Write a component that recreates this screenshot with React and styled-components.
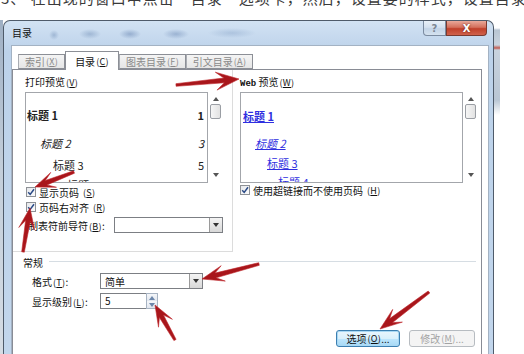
import React from "react";
import styled, { createGlobalStyle } from "styled-components";

const FONT = `"Noto Sans CJK SC", "Noto Sans", sans-serif`;

const GlobalStyle = createGlobalStyle`
  html, body {
    margin: 0;
    padding: 0;
    background: #fff;
    font-family: ${FONT};
    overflow: hidden;
  }
`;

// red annotation arrows drawn over the dialog: [tail, tip]
const arrows = [
  [[176, 85], [239, 79], 20, 9],
  [[74, 172], [35, 187], 17, 8],
  [[23, 252], [30, 208], 18, 8],
  [[259, 264], [202, 279], 19, 8],
  [[175, 340], [155, 305], 18, 8],
  [[429, 292], [380, 329], 19, 8],
];

function arrowPoints([x1, y1], [x2, y2], head, hw) {
  const dx = x2 - x1;
  const dy = y2 - y1;
  const len = Math.hypot(dx, dy);
  const ux = dx / len;
  const uy = dy / len;
  const nx = -uy;
  const ny = ux;
  const hx = x2 - ux * head;
  const hy = y2 - uy * head;
  const jx = hx + ux * 5;
  const jy = hy + uy * 5;
  const bx = hx - ux * 3;
  const by = hy - uy * 3;
  const sw = 2.4;
  const pts = [
    [x1 + nx * 1.3, y1 + ny * 1.3],
    [jx + nx * sw, jy + ny * sw],
    [bx + nx * hw, by + ny * hw],
    [x2, y2],
    [bx - nx * hw, by - ny * hw],
    [jx - nx * sw, jy - ny * sw],
    [x1 - nx * 1.3, y1 - ny * 1.3],
  ];
  return pts.map((p) => p.map((v) => v.toFixed(1)).join(",")).join(" ");
}

const leftEntries = [
  { text: "标题 1", num: "1", indent: 0, top: 15, bold: true },
  { text: "标题 2", num: "3", indent: 13, top: 14, italic: true },
  { text: "标题 3", num: "5", indent: 26, top: 8 },
  { text: "标题 4", num: "7", indent: 40, top: 6 },
];

const webEntries = [
  { text: "标题 1", indent: 0, top: 16, bold: true },
  { text: "标题 2", indent: 12, top: 13, italic: true },
  { text: "标题 3", indent: 24, top: 6 },
  { text: "标题 4", indent: 35, top: 5 },
];

const Mn = ({ k }) => (
  <Mnemonic>
    (<u>{k}</u>)
  </Mnemonic>
);

const Check = () => (
  <CheckBox>
    <svg width="8" height="8" viewBox="0 0 8 8">
      <path d="M1.2 4.2 L3.2 6.4 L7 1.2" fill="none" stroke="#2a4a86" strokeWidth="1.5" />
    </svg>
  </CheckBox>
);

const Tri = ({ up, color = "#333" }) => (
  <svg width="6" height="4" viewBox="0 0 6 4">
    <path d={up ? "M0 4 L3 0 L6 4 Z" : "M0 0 L6 0 L3 4 Z"} fill={color} />
  </svg>
);

const Scroll = () => (
  <ScrollCol>
    <ScrollArrow>
      <Tri up color="#555" />
    </ScrollArrow>
    <Thumb />
    <ScrollArrow $bottom>
      <Tri color="#555" />
    </ScrollArrow>
  </ScrollCol>
);

function App() {
  return (
    <Page>
      <GlobalStyle />
      <TopLine>
        <TopText>3、 在出现的窗口中点击“目录”选项卡，然后，设置要的样式，设置目录的显示级别，再点击选项进行设置</TopText>
      </TopLine>

      <Stage>
        <BackSliver />
        <Dialog>
          <TitleBar>
            <Title>目录</Title>
            <Caption>
              <CapBtn>?</CapBtn>
              <CapBtn $close>X</CapBtn>
            </Caption>
          </TitleBar>

          <Client>
            <TabStrip>
              <Tab $w={47}>索引<Mn k="X" /></Tab>
              <Tab $w={54} $active>目录<Mn k="C" /></Tab>
              <Tab $w={67}>图表目录<Mn k="F" /></Tab>
              <Tab $w={67}>引文目录<Mn k="A" /></Tab>
            </TabStrip>

            <Panel>
              <Columns>
                <LeftCol>
                  <SectionLabel>打印预览<Mn k="V" /></SectionLabel>
                  <PreviewBox>
                    <ListArea>
                      {leftEntries.map((e) => (
                        <Entry key={e.text} $indent={e.indent} $top={e.top} $bold={e.bold} $italic={e.italic}>
                          {e.text}
                          <PageNum>{e.num}</PageNum>
                        </Entry>
                      ))}
                    </ListArea>
                    <Scroll />
                  </PreviewBox>
                  <CheckRow $top={2}>
                    <Check />
                    显示页码<Mn k="S" />
                  </CheckRow>
                  <CheckRow $top={1}>
                    <Check />
                    页码右对齐<Mn k="R" />
                  </CheckRow>
                  <LeaderRow>
                    <span>制表符前导符<Mn k="B" />:</span>
                    <SelectBox $w={109}>
                      <DropBtn>
                        <Tri />
                      </DropBtn>
                    </SelectBox>
                  </LeaderRow>
                </LeftCol>

                <RightCol>
                  <SectionLabel>
                    <WebWord>Web</WebWord> 预览<Mn k="W" />
                  </SectionLabel>
                  <PreviewBox>
                    <ListArea>
                      {webEntries.map((e) => (
                        <Entry key={e.text} $web $indent={e.indent} $top={e.top} $bold={e.bold} $italic={e.italic}>
                          <LinkText>{e.text}</LinkText>
                        </Entry>
                      ))}
                    </ListArea>
                    <Scroll />
                  </PreviewBox>
                  <CheckRow $top={0} $flush>
                    <Check />
                    使用超链接而不使用页码<Mn k="H" />
                  </CheckRow>
                </RightCol>
              </Columns>

              <GroupHeader>
                常规
                <GroupLine />
              </GroupHeader>
              <FormRow>
                <FieldLabel>格式<Mn k="T" />:</FieldLabel>
                <SelectBox $w={103}>
                  <SelectText>简单</SelectText>
                  <DropBtn>
                    <Tri />
                  </DropBtn>
                </SelectBox>
              </FormRow>
              <FormRow>
                <FieldLabel>显示级别<Mn k="L" />:</FieldLabel>
                <SpinInput>5</SpinInput>
                <SpinBtns>
                  <SpinHalf>
                    <Tri up color="#6c86aa" />
                  </SpinHalf>
                  <SpinHalf>
                    <Tri color="#6c86aa" />
                  </SpinHalf>
                </SpinBtns>
              </FormRow>

              <ButtonRow>
                <DlgButton $w={64} $focus>选项<Mn k="O" />...</DlgButton>
                <DlgButton $w={66} $disabled>修改<Mn k="M" />...</DlgButton>
              </ButtonRow>
            </Panel>
          </Client>
        </Dialog>
        <RightEdge />
      </Stage>

      <Overlay width="524" height="354" viewBox="0 0 524 354">
        {arrows.map(([tail, tip, head, hw], i) => (
          <polygon key={i} points={arrowPoints(tail, tip, head, hw)} fill="#a8161b" stroke="#c0262b" strokeWidth="0.6" strokeLinejoin="round" />
        ))}
      </Overlay>
    </Page>
  );
}

const Page = styled.div`
  position: relative;
  width: 524px;
  height: 354px;
  overflow: hidden;
  background: #fff;
`;

const TopLine = styled.div`
  height: 8px;
  overflow: hidden;
  white-space: nowrap;
  padding-left: 1px;
`;

const TopText = styled.div`
  margin-top: -11px;
  font-size: 15px;
  line-height: 17px;
  letter-spacing: 1px;
  color: #3a3a3a;
`;

const Stage = styled.div`
  display: flex;
  margin-top: 12px;
  height: 334px;
`;

const BackSliver = styled.div`
  width: 3px;
  background: linear-gradient(#9fb0c4, #c3ceda 45%, #d5dce4);
`;

const Dialog = styled.div`
  width: 491px;
  box-sizing: border-box;
  border: 1px solid #4f5b6a;
  border-bottom: none;
  border-radius: 7px 7px 0 0;
  padding: 0 4px 0 7px;
  display: flex;
  flex-direction: column;
  background:
    radial-gradient(ellipse 5px 5px at 50px 14px, rgba(110, 140, 180, 0.45), transparent),
    radial-gradient(ellipse 11px 5px at 86px 13px, rgba(110, 140, 180, 0.45), transparent),
    radial-gradient(ellipse 11px 5px at 126px 13px, rgba(100, 130, 175, 0.5), transparent),
    radial-gradient(ellipse 13px 5px at 172px 13px, rgba(100, 130, 175, 0.45), transparent),
    radial-gradient(ellipse 24px 5px at 228px 12px, rgba(120, 150, 190, 0.35), transparent),
    linear-gradient(#d2e2f3, #bcd2ea 30px, #c2d6ec);
`;

const TitleBar = styled.div`
  height: 24px;
  display: flex;
  align-items: flex-start;
`;

const Title = styled.div`
  margin-left: 1px;
  font-size: 10px;
  line-height: 24px;
  color: #111;
`;

const Caption = styled.div`
  margin-left: auto;
  margin-right: 2px;
  display: flex;
`;

const CapBtn = styled.div`
  width: ${(p) => (p.$close ? 41 : 23)}px;
  height: 15px;
  box-sizing: border-box;
  border: 1px solid ${(p) => (p.$close ? "#7a3a30" : "#7b8ba0")};
  border-top: none;
  border-radius: ${(p) => (p.$close ? "0 0 4px 0" : "0 0 0 4px")};
  display: flex;
  align-items: center;
  justify-content: center;
  font-family: "DejaVu Sans", sans-serif;
  font-weight: bold;
  font-size: 10px;
  color: ${(p) => (p.$close ? "#fff" : "#7d8794")};
  text-shadow: ${(p) => (p.$close ? "0 0 2px #5a1a10" : "none")};
  background: ${(p) =>
    p.$close
      ? "linear-gradient(#e9a899, #d4705c 45%, #c0402a 55%, #d0624c)"
      : "linear-gradient(#e8f0f8, #d4e1ef 45%, #c3d4e7 55%, #d5e2ef)"};
`;

const Client = styled.div`
  flex: 1;
  background: #fff;
  border: 1px solid #a3b2c3;
  border-bottom: none;
  display: flex;
  flex-direction: column;
`;

const TabStrip = styled.div`
  display: flex;
  align-items: flex-end;
  height: 18px;
  margin-top: 5px;
  padding-left: 6px;
`;

const Tab = styled.div`
  position: relative;
  z-index: ${(p) => (p.$active ? 1 : 0)};
  width: ${(p) => p.$w}px;
  height: ${(p) => (p.$active ? 19 : 15)}px;
  margin-bottom: ${(p) => (p.$active ? -1 : 0)}px;
  box-sizing: border-box;
  border: 1px solid #8c8f96;
  border-bottom: ${(p) => (p.$active ? "none" : "1px solid #8c8f96")};
  border-left: ${(p) => (p.$active ? "1px solid #8c8f96" : "1px solid #a9acb2")};
  background: ${(p) => (p.$active ? "#fff" : "linear-gradient(#f4f4f4, #e6e6e6)")};
  display: flex;
  align-items: center;
  justify-content: center;
  font-size: 10px;
  color: ${(p) => (p.$active ? "#111" : "#8a8a8a")};
`;

const Mnemonic = styled.span`
  font-size: 9px;
  letter-spacing: 0.3px;
  margin-left: 1px;
`;

const Panel = styled.div`
  flex: 1;
  margin-right: 6px;
  border: 1px solid #898c95;
  border-bottom: none;
  display: flex;
  flex-direction: column;
`;

const Columns = styled.div`
  display: flex;
  height: 182px;
`;

const LeftCol = styled.div`
  width: 220px;
  box-sizing: border-box;
  padding: 5px 9px 0 12px;
  border-right: 1px solid #dcdcdc;
  border-bottom: 1px solid #dcdcdc;
`;

const RightCol = styled.div`
  flex: 1;
  padding: 5px 3px 0 7px;
`;

const SectionLabel = styled.div`
  height: 14px;
  font-size: 10px;
  line-height: 14px;
  color: #111;
`;

const WebWord = styled.span`
  font-family: "Liberation Mono", monospace;
  font-weight: bold;
  font-size: 9px;
`;

const PreviewBox = styled.div`
  display: flex;
  height: 91px;
  margin-top: 3px;
`;

const ListArea = styled.div`
  flex: 1;
  border: 1px solid #a3a6ab;
  padding-left: 1px;
  overflow: hidden;
  background: #fff;
`;

const Entry = styled.div`
  display: flex;
  height: 14px;
  line-height: 14px;
  margin-top: ${(p) => p.$top}px;
  padding-left: ${(p) => p.$indent + (p.$web ? 1 : 0)}px;
  font-size: 11px;
  font-weight: ${(p) => (p.$bold ? 700 : 400)};
  font-style: ${(p) => (p.$italic ? "italic" : "normal")};
  color: ${(p) => (p.$web ? "#2f2fe0" : "#222")};
`;

const LinkText = styled.span`
  text-decoration: underline;
`;

const PageNum = styled.span`
  margin-left: auto;
  margin-right: 3px;
`;

const ScrollCol = styled.div`
  width: 15px;
  display: flex;
  flex-direction: column;
  align-items: center;
`;

const ScrollArrow = styled.div`
  height: 9px;
  display: flex;
  align-items: center;
  justify-content: center;
  margin-top: ${(p) => (p.$bottom ? "auto" : "2px")};
  margin-bottom: ${(p) => (p.$bottom ? "4px" : "0")};
`;

const Thumb = styled.div`
  width: 11px;
  height: 15px;
  margin-top: 1px;
  box-sizing: border-box;
  border: 1px solid #9a9ea4;
  border-radius: 2px;
  background: linear-gradient(90deg, #f6f6f6, #e2e2e2);
`;

const CheckRow = styled.div`
  display: flex;
  align-items: center;
  gap: 3px;
  height: 14px;
  margin-top: ${(p) => p.$top}px;
  padding-left: ${(p) => (p.$flush ? 0 : 1)}px;
  font-size: 10px;
  color: #111;
`;

const CheckBox = styled.div`
  width: 10px;
  height: 10px;
  box-sizing: border-box;
  border: 1px solid #8e9196;
  background: linear-gradient(135deg, #e6e8ec, #fbfbfb);
  display: flex;
  align-items: center;
  justify-content: center;
`;

const LeaderRow = styled.div`
  display: flex;
  align-items: center;
  justify-content: space-between;
  height: 16px;
  margin-top: 3px;
  padding-left: 3px;
  font-size: 10px;
  color: #111;
`;

const SelectBox = styled.div`
  width: ${(p) => p.$w}px;
  height: 16px;
  box-sizing: border-box;
  border: 1px solid #7c7f84;
  background: #fff;
  display: flex;
  align-items: center;
`;

const SelectText = styled.span`
  padding-left: 4px;
  font-size: 10px;
  color: #111;
`;

const DropBtn = styled.div`
  margin-left: auto;
  width: 13px;
  height: 14px;
  box-sizing: border-box;
  border-left: 1px solid #9a9a9a;
  background: linear-gradient(#f4f4f4, #d8d8d8);
  display: flex;
  align-items: center;
  justify-content: center;
`;

const GroupHeader = styled.div`
  display: flex;
  align-items: center;
  height: 14px;
  margin-top: 3px;
  padding-left: 10px;
  font-size: 10px;
  color: #111;
`;

const GroupLine = styled.div`
  flex: 1;
  height: 1px;
  margin: 0 5px 2px 6px;
  background: #d6dde3;
`;

const FormRow = styled.div`
  display: flex;
  align-items: center;
  height: 16px;
  margin-top: 4px;
  padding-left: 19px;
  font-size: 10px;
  color: #111;
`;

const FieldLabel = styled.div`
  width: 68px;
`;

const SpinInput = styled.div`
  width: 46px;
  height: 16px;
  box-sizing: border-box;
  border: 1px solid #7c7f84;
  border-right: none;
  padding-left: 4px;
  font-size: 10px;
  line-height: 14px;
`;

const SpinBtns = styled.div`
  width: 12px;
  height: 16px;
  box-sizing: border-box;
  border: 1px solid #a7b3c2;
  display: flex;
  flex-direction: column;
`;

const SpinHalf = styled.div`
  flex: 1;
  display: flex;
  align-items: center;
  justify-content: center;
  background: linear-gradient(#f5f7fa, #e1e6ee);
`;

const ButtonRow = styled.div`
  display: flex;
  justify-content: flex-end;
  gap: 9px;
  margin-top: 21px;
  padding-right: 6px;
`;

const DlgButton = styled.div`
  width: ${(p) => p.$w}px;
  height: 17px;
  box-sizing: border-box;
  border: 1px solid ${(p) => (p.$focus ? "#3c7fb1" : "#b7bcc1")};
  border-radius: 3px;
  box-shadow: ${(p) => (p.$focus ? "inset 0 0 0 1px #a8d8f4" : "none")};
  background: ${(p) =>
    p.$focus
      ? "linear-gradient(#eaf6fd, #d9f0fc 50%, #bee6fd 50%, #a7d9f5)"
      : "#f4f4f4"};
  display: flex;
  align-items: center;
  justify-content: center;
  font-size: 10px;
  color: ${(p) => (p.$disabled ? "#a3a3a3" : "#111")};
`;

const RightEdge = styled.div`
  width: 6px;
  background: linear-gradient(#fff, #fff 8px, #b8c5d3 10px, #c9d3de 25px, #c25c52 28px, #c9d3de 30px, #b9c6d4 80px, #fff 95px);
`;

const Overlay = styled.svg`
  position: absolute;
  left: 0;
  top: 0;
  pointer-events: none;
`;

export default App;
